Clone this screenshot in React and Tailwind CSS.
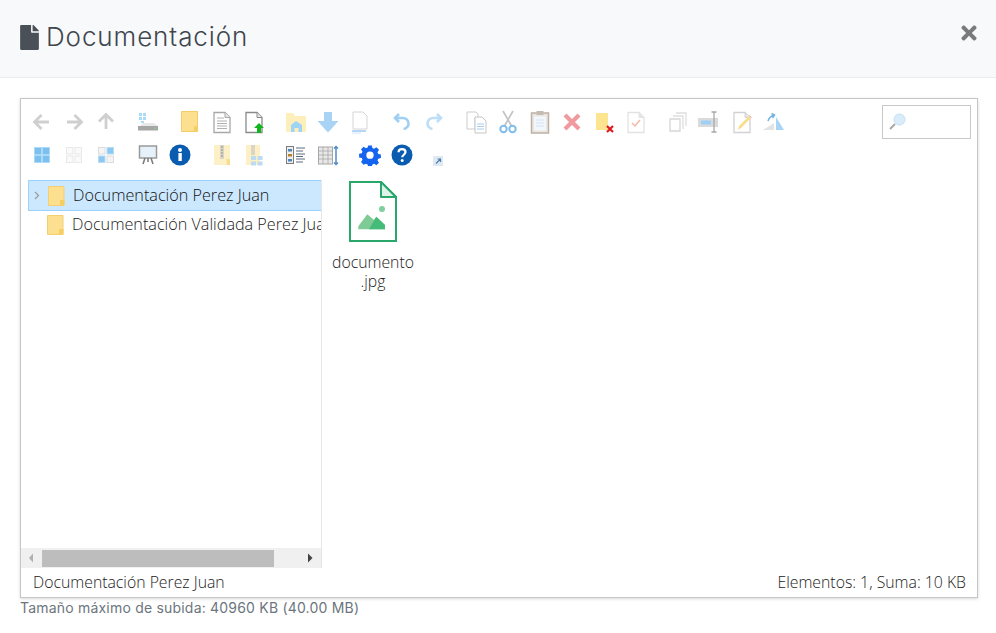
import React from "react";
import { FaFile, FaTimes } from "react-icons/fa";

const S = ({ children, w = 24, h = 24 }) => (
  <svg width={w} height={h} viewBox="0 0 24 24" fill="none" className="block">{children}</svg>
);

const Arrow = ({ r = 0 }) => (
  <S>
    <g transform={`rotate(${r} 12 12)`} stroke="#cfcfcf" strokeWidth="2.800" fill="none">
      <path d="M5 12h14M11.500 5l-7 7 7 7" />
    </g>
  </S>
);
const Folder = () => (
  <S>
    <path d="M3.500 1.500h16v20h-16z" fill="#fde08f" stroke="#f2cd6a" />
    <path d="M16 16h3.500v5.500H16z" fill="#f6cf63" />
  </S>
);
const Doc = ({ stroke = "#a8a8a8", fill = "#fff", children }) => (
  <>
    <path d="M4 2.500h11l5 5v15H4z" fill={fill} stroke={stroke} strokeWidth="1.300" />
    <path d="M15 2.500v5h5" fill="#e6e6e6" stroke={stroke} />
    {children}
  </>
);
const Drive = () => (
  <S w={24} h={24}>
    <g fill="#a9dcf8"><rect x="3" y="3" width="3" height="3"/><rect x="7" y="3" width="3" height="3"/><rect x="3" y="7" width="3" height="3"/><rect x="7" y="7" width="3" height="3"/><rect x="5" y="11" width="3" height="2"/></g>
    <path d="M4 16l3-3h11l4 3z" fill="#e8e8e8"/>
    <rect x="2" y="16" width="20" height="4.500" fill="#a6a6a6"/>
    <rect x="18" y="17.500" width="2" height="1.500" fill="#7fd47f"/>
  </S>
);
const icons = [
  [
    [<Arrow />, <Arrow r={180} />, <Arrow r={90} />],
    [<Drive />],
    [
      <Folder />,
      <S><Doc><path d="M7 8h7M7 11h10M7 13.500h10M7 16h10M7 18.500h10" stroke="#b0b0b0"/></Doc></S>,
      <S><Doc stroke="#8a8a8a"/><path d="M17 13l5 5h-3v5h-4v-5h-3z" fill="#11b51e"/></S>,
    ],
    [
      <S><path d="M2 3h7l2 3h11v16H2z" fill="#fdeebc"/><path d="M7 22v-7l5-4 6 4v7h-3.500v-4h-4v4z" fill="#9ed4f5"/></S>,
      <S><path d="M8 2h8v9h6.500L12 22.500 1.500 11H8z" fill="#a9d3f5"/></S>,
      <S><path d="M5 2h10l4 4v13H5z" fill="#fff" stroke="#d5d5d5"/><path d="M4 21h14" stroke="#9cc9f3" strokeWidth="1.500"/><path d="M4 23h9" stroke="#cfe4f8"/></S>,
    ],
    [
      <S><path d="M9 12L5 8l4-4M5.500 8h7a5.500 5.500 0 0 1 1 11" stroke="#9fd0f3" strokeWidth="2.600"/></S>,
      <S><path d="M15 12l4-4-4-4M18.500 8h-7a5.500 5.500 0 0 0-1 11" stroke="#bcdef6" strokeWidth="2.600"/></S>,
    ],
    [
      <S><path d="M3 2h9l2 2v4h-3v11H3z" fill="#fff" stroke="#cccccc"/><path d="M11 7h7l4 4v12H11z" fill="#fff" stroke="#c4c4c4"/><path d="M13 14h7M13 16.500h7M13 19h7" stroke="#a6cdf0"/></S>,
      <S><path d="M7 1l8.500 15M17 1L8.500 16" stroke="#c4c4c4" strokeWidth="1.700"/><circle cx="7.500" cy="19" r="3.200" stroke="#7fbdec" strokeWidth="2"/><circle cx="16.500" cy="19" r="3.200" stroke="#7fbdec" strokeWidth="2"/></S>,
      <S><rect x="3.500" y="3" width="17" height="20" fill="#ebe6e0" stroke="#bdb1a6" strokeWidth="1.500"/><rect x="6" y="6.500" width="12" height="14" fill="#f1f7fd"/><path d="M8 10h8M8 13h8M8 16h8" stroke="#d3e4f3"/><rect x="8.500" y="1" width="7" height="4" fill="#c4bbb2"/></S>,
      <S><path d="M5 5l14 14M19 5L5 19" stroke="#f09a9f" strokeWidth="4.200"/></S>,
      <S><rect x="4" y="3" width="12" height="17" fill="#fde48f"/><path d="M15 16l6 6M21 16l-6 6" stroke="#e0191f" strokeWidth="2.200"/></S>,
      <S><Doc stroke="#e2e2e2"/><path d="M8 13l3 3 5-6" stroke="#f6b8a6" strokeWidth="1.500"/></S>,
    ],
    [
      <S><path d="M10 3h10v13M7 6h10v13" stroke="#dedede" strokeWidth="1.300"/><path d="M4 9h10v12H4z" fill="#fff" stroke="#d6d6d6" strokeWidth="1.300"/></S>,
      <S><rect x="0" y="8" width="20" height="9" fill="#dadada"/><rect x="3" y="10.500" width="10" height="4" fill="#9ed0f5"/><path d="M16 2v20M13.500 2h5M13.500 22h5" stroke="#a8a8a8" strokeWidth="1.300"/></S>,
      <S><Doc stroke="#d2d2d2"/><path d="M8 20l1-4 10-10 2 2-10 10z" fill="#f9dd8b"/><path d="M19.500 5.500l2 2" stroke="#f3a6a6"/></S>,
      <S><path d="M1 20l11-7v7z" fill="#e3e3e3"/><path d="M14 7v13h8z" fill="#a8d4f5"/><path d="M6 11c1-3 3-5 6-6M9.500 3.500l3 1.500-2 3" stroke="#6fb2e6" strokeWidth="1.500"/></S>,
    ],
  ],
  [
    [
      <S><g fill="#7cc0f0" stroke="#a8d8f8" strokeWidth=".8"><rect x="4.500" y="4.500" width="7" height="7"/><rect x="12.500" y="4.500" width="7" height="7"/><rect x="4.500" y="12.500" width="7" height="7"/><rect x="12.500" y="12.500" width="7" height="7"/></g></S>,
      <S><g fill="#fafafa" stroke="#e8e8e8"><rect x="4.500" y="4.500" width="6.500" height="6.500"/><rect x="13" y="4.500" width="6.500" height="6.500"/><rect x="4.500" y="13" width="6.500" height="6.500"/><rect x="13" y="13" width="6.500" height="6.500"/></g></S>,
      <S><g stroke="#dcdcdc"><rect x="4.500" y="4.500" width="6.500" height="6.500" fill="#f4f4f4"/><rect x="13" y="13" width="6.500" height="6.500" fill="#f4f4f4"/></g><g fill="#8cc8f2" stroke="#b6dcf6"><rect x="13" y="4.500" width="6.500" height="6.500"/><rect x="4.500" y="13" width="6.500" height="6.500"/></g></S>,
    ],
    [
      <S><rect x="3.500" y="3" width="17" height="12" fill="#e6f1fa" stroke="#9a9a9a" strokeWidth="1.500"/><path d="M9 15l-2 6M15 15l2 6M12 15v4" stroke="#7a7a7a" strokeWidth="1.500"/></S>,
      <svg width="24" height="24" viewBox="0 0 24 24" className="block"><circle cx="12" cy="12" r="10.500" fill="#0a5cb0"/><rect x="10.400" y="10" width="3.400" height="8" fill="#fff"/><circle cx="12" cy="7" r="2" fill="#fff"/></svg>,
    ],
    [
      <S><path d="M4 2h16v20H4z" fill="#fdf0c6"/><rect x="10" y="2" width="4" height="14" fill="#dbd5c5"/><path d="M11 4h2M11 7h2M11 10h2M11 13h2" stroke="#8f8f8f"/><rect x="16.500" y="16" width="3.500" height="6" fill="#f9dd8e"/></S>,
      <S><path d="M4 2h14v20H4z" fill="#fdf0c6"/><rect x="9" y="2" width="4" height="10" fill="#dbd5c5"/><g fill="#bcdaf2"><rect x="9" y="13" width="5" height="4"/><rect x="15.500" y="13" width="5" height="4"/><rect x="15.500" y="18.500" width="5" height="4"/><rect x="9" y="18.500" width="5" height="4"/></g></S>,
    ],
    [
      <S><rect x="2.500" y="3.500" width="7" height="17" fill="#efefef" stroke="#7c7c7c"/><rect x="4" y="6" width="4" height="2.500" fill="#4d86b8"/><rect x="4" y="11" width="4" height="2.500" fill="#b9822a"/><rect x="4" y="16" width="4" height="2.500" fill="#4d86b8"/><path d="M12 5h9M12 8h7M12 11h9M12 13.500h7M12 16h9M12 19h7" stroke="#5c6a7c"/></S>,
      <S><rect x="2.500" y="4" width="14" height="17" fill="#e8e8e8" stroke="#a6a6a6"/><path d="M2.500 8h14M2.500 12h14M2.500 16h14M7 4v17M12 4v17" stroke="#a8a8a8" strokeWidth=".8"/><path d="M20 4v17M18 5.500l2-2 2 2M18 19.500l2 2 2-2" stroke="#4f8ccc" strokeWidth="1.500"/></S>,
    ],
    [
      <svg width="22" height="22" viewBox="0 0 24 24" className="block"><path fill="#1464f0" fillRule="evenodd" d="M10 1.500h4l.6 2.900 1.900.8 2.500-1.600 2.800 2.800-1.600 2.500.8 1.900 2.900.6v4l-2.900.6-.8 1.900 1.600 2.500-2.800 2.800-2.500-1.600-1.900.8-.6 2.900h-4l-.6-2.900-1.900-.8L5 22.500l-2.800-2.800 1.600-2.500-.8-1.900L.1 14.700v-4l2.900-.6.8-1.900-1.600-2.500L5 2.900l2.500 1.600 1.900-.8zM12 8.200a4 4 0 1 0 0 8 4 4 0 0 0 0-8z"/></svg>,
      <svg width="24" height="24" viewBox="0 0 24 24" className="block"><circle cx="12" cy="12" r="10.500" fill="#0a5cb0"/><path d="M8.500 9.300c0-2 1.500-3.200 3.500-3.200s3.500 1.200 3.500 3c0 2.600-3.300 2.700-3.300 5.200" stroke="#fff" strokeWidth="2.200" fill="none"/><circle cx="12.200" cy="17.600" r="1.500" fill="#fff"/></svg>,
    ],
  ],
];

const Row = ({ groups, extra }) => (
  <div className="flex h-[33px] items-center">
    {groups.map((g, i) => (
      <div key={i} className={`flex ${i ? "ml-[10px]" : ""}`}>
        {g.map((ic, j) => (
          <div key={j} className="flex h-[33px] w-[32px] items-center justify-center">{ic}</div>
        ))}
      </div>
    ))}
    {extra}
  </div>
);

const TreeFolder = () => (
  <svg width="17" height="20" viewBox="0 0 17 20" className="block shrink-0">
    <path d="M.5.5h15.500v19H.5z" fill="#fde08f" stroke="#f1cf72" />
    <rect x="12" y="14" width="4.500" height="5.500" fill="#f6cf63" />
  </svg>
);

export default function App() {
  return (
    <div className="h-[633px] w-[996px] overflow-hidden bg-white font-['Open_Sans',sans-serif]">
      <header className="flex h-[78px] items-start justify-between border-b border-[#e9ecef] bg-[#f8f9fb] pl-[20px] pr-[19px]">
        <h1 className="flex items-center pt-[21px] font-['Inter',sans-serif] text-[26px] leading-[32px] font-light text-[#40464d]">
          <FaFile className="mr-[7px] h-[25px] w-[19px] text-[#495057]" />
          <span className="tracking-[0.9px]">Documentación</span>
        </h1>
        <FaTimes className="mt-[22px] h-[22px] w-[16px] text-[#7a7a7a]" />
      </header>
      <main className="px-[20px] pt-[20px]">
        <section className="flex h-[500px] w-[958px] flex-col border border-[#c6c6c6] bg-white shadow-[0_1px_3px_rgba(0,0,0,0.15)]">
          <div className="flex h-[81px] shrink-0 items-start justify-between pl-[5px] pr-[6px] pt-[6px]">
            <div>
              <Row groups={icons[0]} />
              <Row
                groups={icons[1]}
                extra={
                  <svg width="10" height="10" viewBox="0 0 10 10" className="ml-[15px] mt-[12px] block">
                    <rect width="10" height="10" fill="#dfe9f3" />
                    <path d="M3 7.500L7 3.500M4.500 3H7.500V6" stroke="#4d7fae" strokeWidth="1.200" fill="none" />
                  </svg>
                }
              />
            </div>
            <div className="flex h-[34px] w-[89px] items-center border border-[#c8c8c8] pl-[5px]">
              <svg width="20" height="20" viewBox="0 0 20 20" className="block">
                <circle cx="11.500" cy="7.500" r="5.500" fill="#d9ecfa" stroke="#c3e0f5" />
                <path d="M7 12l-5 5" stroke="#a8a8a8" strokeWidth="2" />
              </svg>
            </div>
          </div>
          <div className="flex min-h-0 flex-1">
            <div className="flex w-[301px] shrink-0 flex-col border-r border-[#e6e6e6]">
              <div className="flex-1 overflow-hidden pl-[7px] text-[16.200px] font-light text-[#222]">
                <div className="flex h-[31px] w-[294px] items-center border border-[#99d1ff] bg-[#cce8ff] text-[#111]">
                  <svg width="6" height="9" viewBox="0 0 6 9" className="ml-[5px] block shrink-0">
                    <path d="M1 1l3.500 3.500L1 8" stroke="#9a9a9a" strokeWidth="1.200" fill="none" />
                  </svg>
                  <div className="ml-[8px]"><TreeFolder /></div>
                  <span className="ml-[8px] whitespace-nowrap">Documentación Perez Juan</span>
                </div>
                <div className="flex h-[27px] w-[294px] items-center overflow-hidden pl-[19px]">
                  <TreeFolder />
                  <span className="ml-[8px] whitespace-nowrap">Documentación Validada Perez Juan</span>
                </div>
              </div>
              <div className="flex h-[20px] shrink-0 items-center bg-[#f0f0f0]">
                <svg width="21" height="20" viewBox="0 0 21 20" className="block shrink-0">
                  <path d="M12 5.500L8 10l4 4.500z" fill="#b0b0b0" />
                </svg>
                <div className="h-[17px] w-[232px] bg-[#bdbdbd]" />
                <div className="flex flex-1 justify-end pr-[7px]">
                  <svg width="8" height="20" viewBox="0 0 8 20" className="block">
                    <path d="M2 5.500L6.500 10 2 14.500z" fill="#444" />
                  </svg>
                </div>
              </div>
            </div>
            <div className="flex-1 pl-[7px] pt-[1px]">
              <div className="flex w-[88px] flex-col items-center text-center text-[15.800px] leading-[19px] font-light text-[#222]">
                <svg width="48" height="61" viewBox="0 0 48 61" className="block">
                  <path d="M1 1h31l15 15v44H1z" fill="#fff" stroke="#2aa76b" strokeWidth="2" />
                  <path d="M32 1v15h15z" fill="#dff3e8" stroke="#2aa76b" strokeWidth="2" strokeLinejoin="round" />
                  <circle cx="33" cy="28" r="3" fill="#7fcf9f" />
                  <path d="M9.300 48.300v-3L18.300 33.300 25 39l2.300-3.300L36 44v4.300z" fill="#7fcb96" />
                  <path d="M20 48.300L27.300 35.700 36 44v4.300z" fill="#44bb78" />
                </svg>
                <div className="mt-[11px]">documento</div>
                <div>.jpg</div>
              </div>
            </div>
          </div>
          <footer className="flex h-[29px] shrink-0 items-center justify-between pl-[12px] pr-[11px] text-[15.800px] font-light text-[#222]">
            <span>Documentación Perez Juan</span>
            <span>Elementos: 1, Suma: 10 KB</span>
          </footer>
        </section>
        <p className="mt-[1px] font-['Inter',sans-serif] text-[14px] leading-[17px] tracking-[0.2px] text-[#6c757d]">
          Tamaño máximo de subida: 40960 KB (40.00 MB)
        </p>
      </main>
    </div>
  );
}
